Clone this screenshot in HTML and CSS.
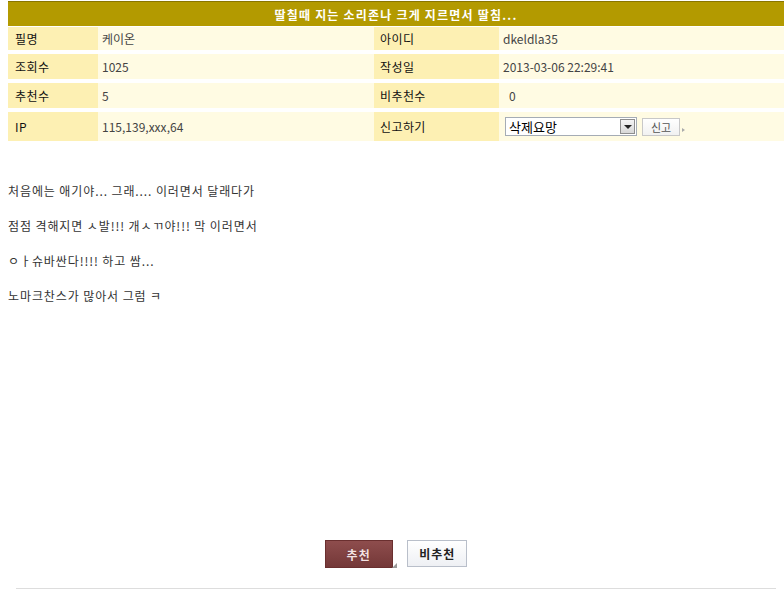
FILE: index.html
```html
<!DOCTYPE html>
<html>
<head>
<meta charset="utf-8">
<title>게시물 보기</title>
<link rel="stylesheet" href="styles.css">
</head>
<body>

<div class="view">
  <div class="view-title">딸칠때 지는 소리존나 크게 지르면서 딸침...</div>

  <div class="info-row row-1">
    <div class="label">필명</div>
    <div class="value">케이온</div>
    <div class="label label-right">아이디</div>
    <div class="value">dkeldla35</div>
  </div>
  <div class="info-row row-2">
    <div class="label">조회수</div>
    <div class="value">1025</div>
    <div class="label label-right">작성일</div>
    <div class="value">2013-03-06 22:29:41</div>
  </div>
  <div class="info-row row-3">
    <div class="label">추천수</div>
    <div class="value">5</div>
    <div class="label label-right">비추천수</div>
    <div class="value value-pad">0</div>
  </div>
  <div class="info-row row-4">
    <div class="label">IP</div>
    <div class="value">115,139,xxx,64</div>
    <div class="label label-right">신고하기</div>
    <div class="value report">
      <div class="report-select">
        <span>삭제요망</span>
        <span class="select-arrow"></span>
      </div>
      <button class="report-button">신고</button>
      <span class="report-tri"></span>
    </div>
  </div>

  <div class="content">
    <p>처음에는 애기야... 그래.... 이러면서 달래다가</p>
    <p>점점 격해지면 ㅅ발!!! 개ㅅㄲ야!!! 막 이러면서</p>
    <p>ㅇㅏ슈바싼다!!!! 하고 쌈...</p>
    <p>노마크찬스가 많아서 그럼 ㅋ</p>
  </div>

  <div class="vote">
    <button class="vote-up">추천<span class="vote-tri"></span></button>
    <button class="vote-down">비추천</button>
  </div>

  <div class="bottom-line"></div>
</div>

</body>
</html>
```

FILE: styles.css
```css
body {
  margin: 0 0 0 8px;
  font-family: "Noto Sans CJK KR", "Liberation Sans", sans-serif;
  font-size: 12px;
  color: #333;
  background-color: #fff;
  overflow: hidden;
}

.view {
  width: 776px;
}

.view-title {
  margin-top: 1px;
  height: 25px;
  line-height: 25px;
  background-color: #b39a00;
  border-top: 1px solid #8a7600;
  color: #fff;
  font-weight: bold;
  font-size: 12px;
  text-align: center;
  letter-spacing: 1.2px;
  box-sizing: border-box;
}

.info-row {
  display: grid;
  grid-template-columns: 90px 276px 125px 285px;
  margin-bottom: 4px;
}

.row-1 { height: 23px; margin-top: 1px; }
.row-2 { height: 25px; }
.row-3 { height: 25px; margin-top: 1px; }
.row-4 { height: 29px; margin-top: 1px; }

.label,
.value {
  display: flex;
  align-items: center;
}

.label {
  background-color: #fdf0b3;
  padding-left: 7px;
  color: #111;
  letter-spacing: 0.4px;
}

.label-right {
  padding-left: 6px;
}

.value {
  background-color: #fffbe3;
  padding-left: 4px;
  color: #444;
}

.value-pad {
  padding-left: 10px;
}

.report {
  padding-left: 6px;
}

.report-select {
  width: 132px;
  height: 19px;
  border: 1px solid #a5acb5;
  background-color: #fff;
  box-sizing: border-box;
  display: flex;
  align-items: center;
  justify-content: space-between;
  font-size: 13px;
  color: #000;
  padding-left: 3px;
}

.select-arrow {
  width: 15px;
  height: 15px;
  margin-right: 1px;
  background: linear-gradient(#f4f4f4, #d8d8d8);
  border: 1px solid #8e8e8e;
  box-sizing: border-box;
  position: relative;
}

.select-arrow::after {
  content: "";
  position: absolute;
  left: 3px;
  top: 5px;
  border-left: 4px solid transparent;
  border-right: 4px solid transparent;
  border-top: 4px solid #222;
}

.report-button {
  margin-left: 5px;
  width: 38px;
  height: 18px;
  padding: 0;
  border: 1px solid #c8c8c8;
  background: linear-gradient(#fff, #f1f1f1);
  font-family: inherit;
  font-size: 11px;
  color: #555;
}

.report-tri {
  margin-left: 2px;
  margin-top: 6px;
  border-left: 3px solid #aaa;
  border-top: 2px solid transparent;
  border-bottom: 2px solid transparent;
}

.content {
  padding-top: 28px;
  height: 367px;
}

.content p {
  margin: 0;
  line-height: 35px;
  height: 35px;
  color: #333;
  letter-spacing: 0.9px;
}

.vote {
  text-align: center;
  height: 48px;
}

.vote button {
  font-family: inherit;
  vertical-align: top;
  padding: 0;
}

.vote-up {
  position: relative;
  width: 68px;
  height: 28px;
  border: 1px solid #6a2f2f;
  background: linear-gradient(#8e4d4d, #743838);
  color: #f4e2e2;
  font-size: 12px;
  font-weight: bold;
  letter-spacing: 1px;
  text-shadow: 0 0 1px #5a2020;
  margin-right: 12px;
}

.vote-tri {
  position: absolute;
  right: -5px;
  bottom: -1px;
  border-right: 5px solid #999;
  border-top: 5px solid transparent;
}

.vote-down {
  width: 60px;
  height: 27px;
  border: 1px solid #b9bfca;
  background: linear-gradient(#fff, #eef0f4);
  color: #222;
  font-size: 12px;
  font-weight: bold;
  letter-spacing: 1px;
}

.bottom-line {
  margin-left: 8px;
  width: 760px;
  height: 1px;
  background-color: #ddd;
}
```
